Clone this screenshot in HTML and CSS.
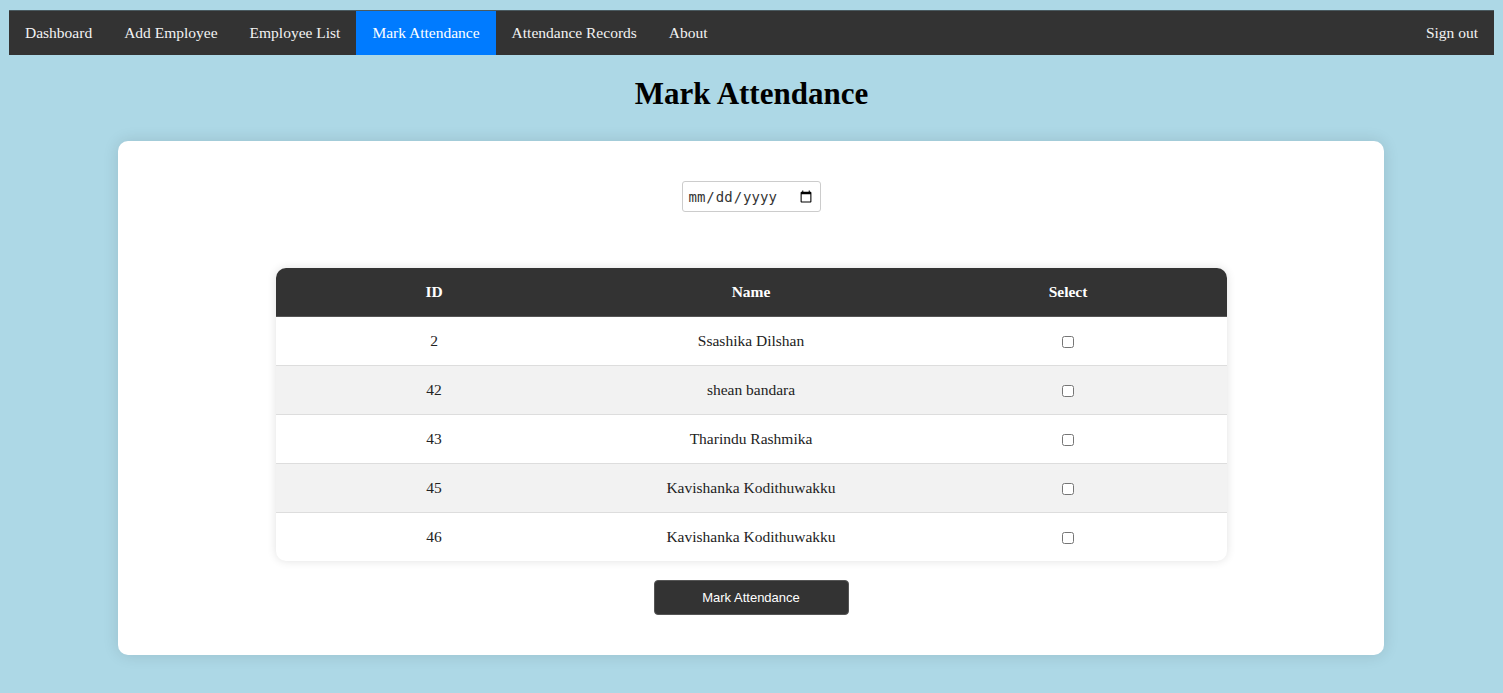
FILE: index.html
```html
<!DOCTYPE html>
<html>
<head>
<meta charset="utf-8">
<link rel="stylesheet" href="styles.css">
</head>
<body>
<nav class="navbar">
  <div class="nav-left">
    <a class="nav-link" href="#">Dashboard</a>
    <a class="nav-link" href="#">Add Employee</a>
    <a class="nav-link" href="#">Employee List</a>
    <a class="nav-link active" href="#">Mark Attendance</a>
    <a class="nav-link" href="#">Attendance Records</a>
    <a class="nav-link" href="#">About</a>
  </div>
  <a class="nav-link" href="#">Sign out</a>
</nav>
<h1 class="title">Mark Attendance</h1>
<main class="card">
  <input class="date-input" type="date">
  <table class="att-table">
    <thead>
      <tr><th>ID</th><th>Name</th><th>Select</th></tr>
    </thead>
    <tbody>
      <tr><td>2</td><td>Ssashika Dilshan</td><td><input type="checkbox"></td></tr>
      <tr><td>42</td><td>shean bandara</td><td><input type="checkbox"></td></tr>
      <tr><td>43</td><td>Tharindu Rashmika</td><td><input type="checkbox"></td></tr>
      <tr><td>45</td><td>Kavishanka Kodithuwakku</td><td><input type="checkbox"></td></tr>
      <tr><td>46</td><td>Kavishanka Kodithuwakku</td><td><input type="checkbox"></td></tr>
    </tbody>
  </table>
  <button class="submit-btn" type="button">Mark Attendance</button>
</main>
</body>
</html>
```

FILE: styles.css
```css
html, body {
  margin: 0;
  padding: 0;
}
body {
  background: #add8e6;
  font-family: "Liberation Serif", "Times New Roman", serif;
  padding: 10px 9px 38px;
  min-height: 693px;
  box-sizing: border-box;
}
.navbar {
  display: flex;
  justify-content: space-between;
  align-items: stretch;
  background: #333;
  height: 45px;
  border-top: 1px solid #4a5a60;
  box-sizing: border-box;
}
.nav-left {
  display: flex;
}
.nav-link {
  display: flex;
  align-items: center;
  padding: 0 16px;
  color: #f2f2f2;
  text-decoration: none;
  font-size: 15.5px;
}
.nav-link.active {
  background: #007bff;
  color: #fff;
}
.title {
  text-align: center;
  font-size: 31px;
  line-height: 36px;
  margin: 21px 0 29px;
  font-weight: bold;
  color: #000;
}
.card {
  width: 1266px;
  margin: 0 0 0 109px;
  background: #fff;
  border-radius: 10px;
  box-shadow: 0 0 16px rgba(0, 0, 0, 0.12);
  padding: 40px 0;
  display: flex;
  flex-direction: column;
  align-items: center;
  box-sizing: border-box;
}
.date-input {
  width: 139px;
  height: 31px;
  box-sizing: border-box;
  border: 1px solid #ccc;
  border-radius: 3px;
  padding: 4px 5px;
  font-family: "DejaVu Sans Mono", monospace;
  font-size: 14px;
  color: #333;
  margin: 0 0 56px;
}
.att-table {
  width: 951px;
  border-collapse: separate;
  border-spacing: 0;
  border-radius: 10px;
  overflow: hidden;
  box-shadow: 0 0 10px rgba(0, 0, 0, 0.12);
  table-layout: fixed;
  font-size: 15.5px;
}
.att-table th {
  background: #333;
  color: #fff;
  font-weight: bold;
  height: 49px;
  padding: 0;
  border-bottom: 1px solid #555;
  box-sizing: border-box;
}
.att-table td {
  height: 48px;
  padding: 0;
  text-align: center;
  color: #222;
  border-bottom: 1px solid #ddd;
}
.att-table tbody tr:nth-child(even) td {
  background: #f2f2f2;
}
.att-table tbody tr:last-child td {
  border-bottom: none;
}
.att-table input[type="checkbox"] {
  margin: 0;
  width: 12px;
  height: 12px;
  vertical-align: middle;
}
.submit-btn {
  margin-top: 19px;
  width: 195px;
  height: 35px;
  background: #333;
  color: #fff;
  border: 1px solid #555;
  border-radius: 4px;
  font-family: "Liberation Sans", Arial, sans-serif;
  font-size: 13px;
}
```
